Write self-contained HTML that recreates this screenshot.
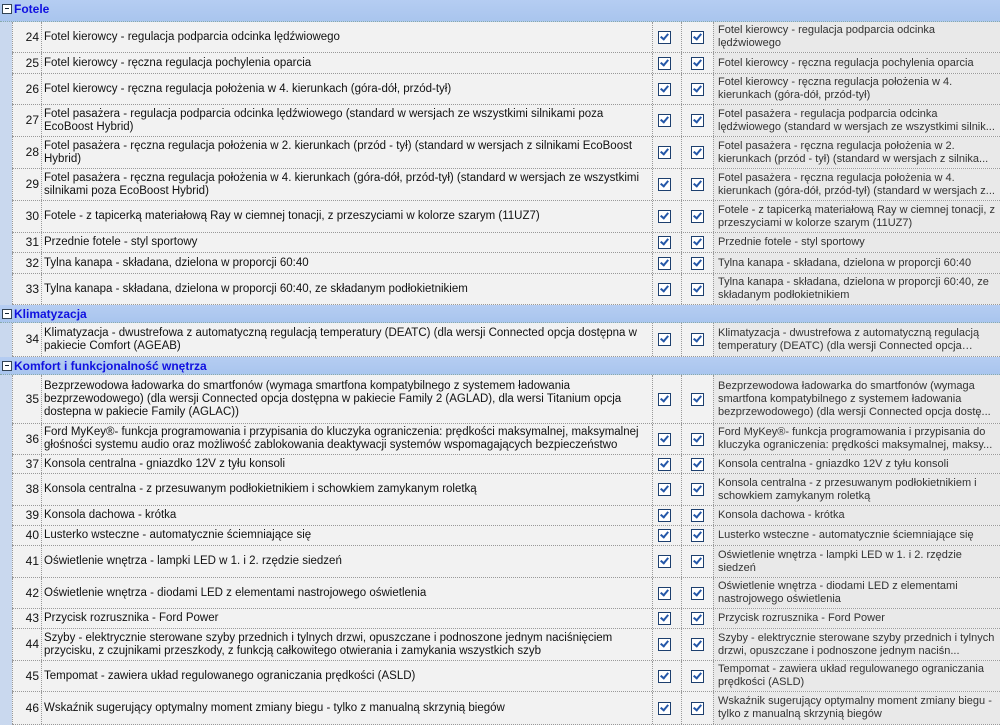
<!DOCTYPE html>
<html><head><meta charset="utf-8"><style>
body{margin:0;width:1000px;height:724px;overflow:hidden;background:#c9d8ee;font-family:"Liberation Sans",Arial,sans-serif;font-size:11.5px;color:#111;position:relative}
.h{position:absolute;left:0;width:1000px;background:linear-gradient(#b5cdf2,#a9c5ee);border-bottom:1px dotted #8aa;}
.h b{position:absolute;left:14px;top:2px;color:#1010e0;font-size:12px}
.h i{position:absolute;left:2px;top:4px;width:8px;height:8px;border:1px solid #345;background:#fff}
.h i:after{content:"";position:absolute;left:2px;top:3px;width:4px;height:1px;background:#123}
.r{position:absolute;left:12px;width:988px;background:#f2f2f2;border-bottom:1px dotted #999}
.r>div{position:absolute;top:0;bottom:0;display:flex;align-items:center;line-height:13px;border-left:1px dotted #999;box-sizing:border-box}
.n{left:0;width:29px;justify-content:flex-end;padding-right:2px;font-size:12px}
.d{left:29px;width:611px;padding-left:2px}
.c1{left:640px;width:29px;justify-content:center;padding-right:6px}
.c2{left:669px;width:32px;justify-content:center}
.t{left:701px;width:287px;padding-left:4px;background:#e9e9e9;color:#333;font-size:11px}
.t span{display:-webkit-box;-webkit-line-clamp:2;-webkit-box-orient:vertical;overflow:hidden}
.k{width:11px;height:11px;border:1px solid #1d3f6e;background:#fff;position:relative}
.k:after{content:"";position:absolute;left:3px;top:0px;width:3px;height:6px;border:solid #2457a8;border-width:0 2px 2px 0;transform:rotate(40deg)}
</style></head><body>
<div class="h" style="top:0;height:21px"><i></i><b>Fotele</b></div>
<div class="r" style="top:22px;height:30px"><div class="n">24</div><div class="d">Fotel kierowcy -  regulacja podparcia odcinka lędźwiowego</div><div class="c1"><span class="k"></span></div><div class="c2"><span class="k"></span></div><div class="t"><span>Fotel kierowcy -  regulacja podparcia odcinka lędźwiowego</span></div></div>
<div class="r" style="top:53px;height:20px"><div class="n">25</div><div class="d">Fotel kierowcy - ręczna regulacja pochylenia oparcia</div><div class="c1"><span class="k"></span></div><div class="c2"><span class="k"></span></div><div class="t"><span>Fotel kierowcy - ręczna regulacja pochylenia oparcia</span></div></div>
<div class="r" style="top:74px;height:30px"><div class="n">26</div><div class="d">Fotel kierowcy - ręczna regulacja położenia w 4. kierunkach (góra-dół, przód-tył)</div><div class="c1"><span class="k"></span></div><div class="c2"><span class="k"></span></div><div class="t"><span>Fotel kierowcy - ręczna regulacja położenia w 4. kierunkach (góra-dół, przód-tył)</span></div></div>
<div class="r" style="top:105px;height:31px"><div class="n">27</div><div class="d">Fotel pasażera - regulacja podparcia odcinka lędźwiowego (standard w wersjach ze wszystkimi silnikami poza EcoBoost Hybrid)</div><div class="c1"><span class="k"></span></div><div class="c2"><span class="k"></span></div><div class="t"><span>Fotel pasażera - regulacja podparcia odcinka lędźwiowego (standard w wersjach ze wszystkimi silnik...</span></div></div>
<div class="r" style="top:137px;height:31px"><div class="n">28</div><div class="d">Fotel pasażera - ręczna regulacja położenia w 2. kierunkach (przód - tył) (standard w wersjach z silnikami EcoBoost Hybrid)</div><div class="c1"><span class="k"></span></div><div class="c2"><span class="k"></span></div><div class="t"><span>Fotel pasażera - ręczna regulacja położenia w 2. kierunkach (przód - tył) (standard w wersjach z silnika...</span></div></div>
<div class="r" style="top:169px;height:31px"><div class="n">29</div><div class="d">Fotel pasażera - ręczna regulacja położenia w 4. kierunkach (góra-dół, przód-tył) (standard w wersjach ze wszystkimi silnikami poza EcoBoost Hybrid)</div><div class="c1"><span class="k"></span></div><div class="c2"><span class="k"></span></div><div class="t"><span>Fotel pasażera - ręczna regulacja położenia w 4. kierunkach (góra-dół, przód-tył) (standard w wersjach z...</span></div></div>
<div class="r" style="top:201px;height:31px"><div class="n">30</div><div class="d">Fotele - z tapicerką materiałową Ray w ciemnej tonacji, z przeszyciami w kolorze szarym (11UZ7)</div><div class="c1"><span class="k"></span></div><div class="c2"><span class="k"></span></div><div class="t"><span>Fotele - z tapicerką materiałową Ray w ciemnej tonacji, z przeszyciami w kolorze szarym (11UZ7)</span></div></div>
<div class="r" style="top:233px;height:19px"><div class="n">31</div><div class="d">Przednie fotele - styl sportowy</div><div class="c1"><span class="k"></span></div><div class="c2"><span class="k"></span></div><div class="t"><span>Przednie fotele - styl sportowy</span></div></div>
<div class="r" style="top:253px;height:20px"><div class="n">32</div><div class="d">Tylna kanapa - składana, dzielona w proporcji 60:40</div><div class="c1"><span class="k"></span></div><div class="c2"><span class="k"></span></div><div class="t"><span>Tylna kanapa - składana, dzielona w proporcji 60:40</span></div></div>
<div class="r" style="top:274px;height:30px"><div class="n">33</div><div class="d">Tylna kanapa - składana, dzielona w proporcji 60:40, ze składanym podłokietnikiem</div><div class="c1"><span class="k"></span></div><div class="c2"><span class="k"></span></div><div class="t"><span>Tylna kanapa - składana, dzielona w proporcji 60:40, ze składanym podłokietnikiem</span></div></div>
<div class="h" style="top:305px;height:17px"><i></i><b>Klimatyzacja</b></div>
<div class="r" style="top:323px;height:33px"><div class="n">34</div><div class="d">Klimatyzacja - dwustrefowa z automatyczną regulacją temperatury (DEATC) (dla wersji Connected opcja dostępna w pakiecie Comfort (AGEAB)</div><div class="c1"><span class="k"></span></div><div class="c2"><span class="k"></span></div><div class="t"><span>Klimatyzacja - dwustrefowa z automatyczną regulacją temperatury (DEATC) (dla wersji Connected opcja dostę...</span></div></div>
<div class="h" style="top:357px;height:17px"><i></i><b>Komfort i funkcjonalność wnętrza</b></div>
<div class="r" style="top:375px;height:48px"><div class="n">35</div><div class="d">Bezprzewodowa ładowarka do smartfonów (wymaga smartfona kompatybilnego z systemem ładowania bezprzewodowego) (dla wersji Connected opcja dostępna w pakiecie Family 2 (AGLAD), dla wersi Titanium opcja dostepna w pakiecie Family (AGLAC))</div><div class="c1"><span class="k"></span></div><div class="c2"><span class="k"></span></div><div class="t"><span style="-webkit-line-clamp:3">Bezprzewodowa ładowarka do smartfonów (wymaga smartfona kompatybilnego z systemem ładowania bezprzewodowego) (dla wersji Connected opcja dostę...</span></div></div>
<div class="r" style="top:424px;height:30px"><div class="n">36</div><div class="d">Ford MyKey®- funkcja programowania i przypisania do kluczyka ograniczenia: prędkości maksymalnej, maksymalnej głośności systemu audio oraz możliwość zablokowania deaktywacji systemów wspomagających bezpieczeństwo</div><div class="c1"><span class="k"></span></div><div class="c2"><span class="k"></span></div><div class="t"><span>Ford MyKey®- funkcja programowania i przypisania do kluczyka ograniczenia: prędkości maksymalnej, maksy...</span></div></div>
<div class="r" style="top:455px;height:18px"><div class="n">37</div><div class="d">Konsola centralna - gniazdko 12V z tyłu konsoli</div><div class="c1"><span class="k"></span></div><div class="c2"><span class="k"></span></div><div class="t"><span>Konsola centralna - gniazdko 12V z tyłu konsoli</span></div></div>
<div class="r" style="top:474px;height:31px"><div class="n">38</div><div class="d">Konsola centralna - z przesuwanym podłokietnikiem i schowkiem zamykanym roletką</div><div class="c1"><span class="k"></span></div><div class="c2"><span class="k"></span></div><div class="t"><span>Konsola centralna - z przesuwanym podłokietnikiem i schowkiem zamykanym roletką</span></div></div>
<div class="r" style="top:506px;height:19px"><div class="n">39</div><div class="d">Konsola dachowa - krótka</div><div class="c1"><span class="k"></span></div><div class="c2"><span class="k"></span></div><div class="t"><span>Konsola dachowa - krótka</span></div></div>
<div class="r" style="top:526px;height:19px"><div class="n">40</div><div class="d">Lusterko wsteczne - automatycznie ściemniające się</div><div class="c1"><span class="k"></span></div><div class="c2"><span class="k"></span></div><div class="t"><span>Lusterko wsteczne - automatycznie ściemniające się</span></div></div>
<div class="r" style="top:546px;height:31px"><div class="n">41</div><div class="d">Oświetlenie wnętrza -  lampki LED w 1. i 2. rzędzie siedzeń</div><div class="c1"><span class="k"></span></div><div class="c2"><span class="k"></span></div><div class="t"><span>Oświetlenie wnętrza -  lampki LED w 1. i 2. rzędzie siedzeń</span></div></div>
<div class="r" style="top:578px;height:30px"><div class="n">42</div><div class="d">Oświetlenie wnętrza - diodami LED z elementami nastrojowego oświetlenia</div><div class="c1"><span class="k"></span></div><div class="c2"><span class="k"></span></div><div class="t"><span>Oświetlenie wnętrza - diodami LED z elementami nastrojowego oświetlenia</span></div></div>
<div class="r" style="top:609px;height:19px"><div class="n">43</div><div class="d">Przycisk rozrusznika - Ford Power</div><div class="c1"><span class="k"></span></div><div class="c2"><span class="k"></span></div><div class="t"><span>Przycisk rozrusznika - Ford Power</span></div></div>
<div class="r" style="top:629px;height:31px"><div class="n">44</div><div class="d">Szyby - elektrycznie sterowane szyby przednich i tylnych drzwi, opuszczane i podnoszone jednym naciśnięciem przycisku, z czujnikami przeszkody, z funkcją całkowitego otwierania i zamykania wszystkich szyb</div><div class="c1"><span class="k"></span></div><div class="c2"><span class="k"></span></div><div class="t"><span>Szyby - elektrycznie sterowane szyby przednich i tylnych drzwi, opuszczane i podnoszone jednym naciśn...</span></div></div>
<div class="r" style="top:661px;height:30px"><div class="n">45</div><div class="d">Tempomat - zawiera układ regulowanego ograniczania prędkości (ASLD)</div><div class="c1"><span class="k"></span></div><div class="c2"><span class="k"></span></div><div class="t"><span>Tempomat - zawiera układ regulowanego ograniczania prędkości (ASLD)</span></div></div>
<div class="r" style="top:692px;height:32px"><div class="n">46</div><div class="d">Wskaźnik sugerujący optymalny moment zmiany biegu - tylko z manualną skrzynią biegów</div><div class="c1"><span class="k"></span></div><div class="c2"><span class="k"></span></div><div class="t"><span>Wskaźnik sugerujący optymalny moment zmiany biegu - tylko z manualną skrzynią biegów</span></div></div>
</body></html>
